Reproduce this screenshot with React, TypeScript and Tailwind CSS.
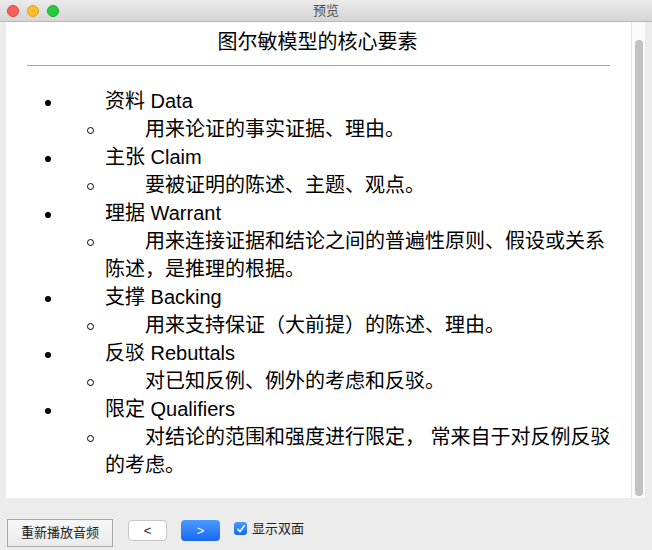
import React from "react";

const FONT = { fontFamily: '"Liberation Sans", "Noto Sans CJK SC", sans-serif' };

type Item = { head: string; sub: string };

const items: Item[] = [
  { head: "资料 Data", sub: "用来论证的事实证据、理由。" },
  { head: "主张 Claim", sub: "要被证明的陈述、主题、观点。" },
  { head: "理据 Warrant", sub: "用来连接证据和结论之间的普遍性原则、假设或关系陈述，是推理的根据。" },
  { head: "支撑 Backing", sub: "用来支持保证（大前提）的陈述、理由。" },
  { head: "反驳 Rebuttals", sub: "对已知反例、例外的考虑和反驳。" },
  { head: "限定 Qualifiers", sub: "对结论的范围和强度进行限定， 常来自于对反例反驳的考虑。" },
];

function TitleBar() {
  return (
    <div className="h-[22px] shrink-0 grid grid-cols-[1fr_auto_1fr] items-center bg-gradient-to-b from-[#ebebeb] to-[#d5d5d5] border-b border-[#b8b8b8]">
      <div className="flex items-center gap-[8px] pl-[7px]">
        <span className="w-[12px] h-[12px] rounded-full bg-[#fc5f57] border border-[#e0443e]" />
        <span className="w-[12px] h-[12px] rounded-full bg-[#fdbc2e] border border-[#dea123]" />
        <span className="w-[12px] h-[12px] rounded-full bg-[#2ac840] border border-[#1aab29]" />
      </div>
      <div className="text-[13px] text-[#4d4d4d] leading-none">预览</div>
      <div />
    </div>
  );
}

function Outline() {
  return (
    <div className="pr-[17px] pl-[21px] text-[20px] leading-[28px] text-black">
      {items.map((it) => (
        <div key={it.head}>
          <p className="pl-[78px] -indent-[78px]">
            <span className="inline-block w-[78px] indent-0 align-middle">
              <span className="block ml-[18px] w-[6px] h-[6px] rounded-full bg-black" />
            </span>
            {it.head}
          </p>
          <p className="pl-[78px] -indent-[18px]">
            <span className="inline-block w-[58px] indent-0 align-middle">
              <span className="block w-[7px] h-[7px] rounded-full border border-black" />
            </span>
            {it.sub}
          </p>
        </div>
      ))}
    </div>
  );
}

export default function App() {
  return (
    <div className="w-[652px] h-[550px] flex flex-col bg-[#ececec] overflow-hidden" style={FONT}>
      <TitleBar />

      {/* document view */}
      <div className="flex h-[476px] shrink-0 pl-[6px] pr-[7px]">
        <div className="flex-1 bg-white pt-[6px]">
          <h1 className="text-center text-[20px] leading-[28px] text-black pr-[2px]">图尔敏模型的核心要素</h1>
          <div className="mt-[9px] mx-[21px] h-px bg-[#a3a3a3]" />
          <div className="mt-[21px]">
            <Outline />
          </div>
        </div>
        <div className="w-[14px] bg-[#fafafa] border-l border-[#e3e3e3] pt-[18px] pb-[2px] pl-[3px]">
          <div className="w-[8px] h-full rounded-full bg-[#c2c2c2]" />
        </div>
      </div>

      {/* controls */}
      <div className="flex items-start pt-[21px] pl-[7px]">
        <button className="w-[106px] h-[28px] border border-[#a9a9a9] bg-gradient-to-b from-[#f7f7f7] to-[#ebebeb] text-[13px] text-[#222]">
          重新播放音频
        </button>
        <button className="ml-[15px] mt-[1px] w-[39px] h-[21px] rounded-[4px] border border-[#c6c6c6] bg-white text-[13px] text-[#222] leading-none">
          &lt;
        </button>
        <button className="ml-[14px] mt-[1px] w-[39px] h-[21px] rounded-[4px] bg-gradient-to-b from-[#4a9bff] to-[#1667f2] text-[13px] text-white leading-none">
          &gt;
        </button>
        <label className="ml-[14px] mt-[3px] flex items-center gap-[5px] text-[13px] text-[#222] leading-none">
          <span className="w-[13px] h-[13px] rounded-[3px] bg-gradient-to-b from-[#4a9bff] to-[#1667f2] flex items-center justify-center">
            <svg width="10" height="10" viewBox="0 0 10 10" fill="none">
              <path d="M1.8 5.2 L4 7.6 L8.3 1.8" stroke="white" strokeWidth="1.6" strokeLinecap="round" strokeLinejoin="round" />
            </svg>
          </span>
          显示双面
        </label>
      </div>
    </div>
  );
}
